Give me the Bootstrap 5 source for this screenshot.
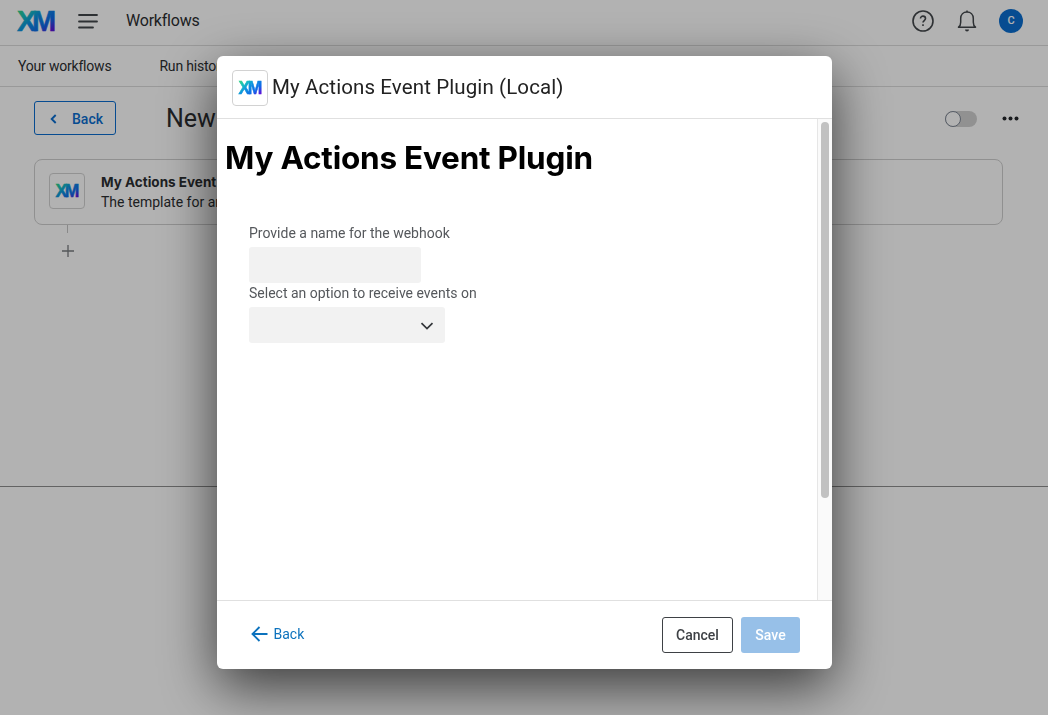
<!DOCTYPE html>
<html lang="en">
<head>
<meta charset="utf-8">
<meta name="viewport" content="width=device-width, initial-scale=1">
<title>Workflows</title>
<link href="https://cdn.jsdelivr.net/npm/bootstrap@5.3.0/dist/css/bootstrap.min.css" rel="stylesheet">
<style>
body{font-family:Roboto,"Liberation Sans",sans-serif;font-size:14px;line-height:20px;color:#2b2e31;background:#fff;height:715px;overflow:hidden}
svg{display:block;flex:none;overflow:visible}
.xm-text{font-family:"Liberation Sans",sans-serif;font-weight:700;stroke-width:.5px}
.xm-lg{font-size:29px;letter-spacing:-4.4px}
.xm-sm{font-size:17.5px;letter-spacing:-2.5px}
.topbar{height:46px;border-bottom:1px solid #dcdcdc;padding-left:17px;padding-right:25px}
.product{font-size:16px;font-weight:400;margin-left:28px;letter-spacing:-.22px}
.menu-btn{margin-left:23px}
.help{margin-right:23px}
.avatar{width:24px;height:24px;background:#0b6ed0;color:#fff;font-size:11px;font-weight:500;margin-left:22px}
.subnav{height:41px;border-bottom:1px solid #dcdcdc;padding-left:18px;gap:48px;letter-spacing:-.2px}
.toolbar{height:72px;padding:0 28px 9px 34px}
.btn-outline-back{width:82px;height:34px;border:1px solid #0b6ed0;border-radius:3px;color:#0b6ed0;font-size:14px;font-weight:500;padding:2px 0 0 15px;gap:15px;margin-bottom:2px}
.btn-outline-back span{padding-top:2px}
.flow-title{font-size:25px;margin-left:50px}
.toggle{width:32px;height:16px;border-radius:8px;background:#d0d0d0}
.toggle i{display:block;width:16px;height:16px;border-radius:50%;border:1px solid #7d8694;background:#fff}
.dots{margin-left:25px}
.canvas{height:328px;padding:0 45px 0 34px;border-bottom:1px solid #8f8f8f}
.step{height:66px;border:1px solid #cfcfcf;border-radius:8px;padding-left:14px}
.step .xm-tile{margin-bottom:2px}
.step-name{font-family:Inter,sans-serif;font-weight:700;font-size:13.5px}
.xm-tile{width:36px;height:36px;border:1px solid #d2d2d2;border-radius:4px;flex:none}
.stem{width:1px;height:8px;background:#c4c4c4;margin-left:33px}
.plus{margin:12px 0 0 28px}
.scrim{position:fixed;inset:0;background:rgba(0,0,0,.3)}
.dialog{width:615px;height:613px;margin:56px 0 0 217px;background:#fff;border-radius:6px;box-shadow:0 18px 56px rgba(0,0,0,.68);overflow:hidden}
.dialog-head{height:63px;border-bottom:1px solid #e0e0e0;padding-left:15px;gap:4px}
.dialog-head .xm-tile{margin-top:2px}
.dialog-title{font-size:20.5px;letter-spacing:.11px;color:#222}
.dialog-main{height:481px}
.track{width:15px;background:#fafafa;border-left:1px solid #e6e6e6;padding:3px 0 0 3px}
.thumb{width:8px;height:376px;border-radius:4px;background:#c1c1c1}
.plugin-title{font-family:Inter,sans-serif;font-size:31.5px;line-height:38px;font-weight:700;color:#000;margin:20px 0 0 8px;letter-spacing:-.22px}
.fields{margin:46px 0 0 32px;color:#55585c}
.fields label{display:block;height:20px;line-height:20px;margin-bottom:4px}
.field-box{height:36px;background:#f2f2f2;border-radius:3px}
.text-box{width:172px}
.pick-box{width:196px;padding:2px 11px 0 0}
.dialog-foot{height:69px;border-top:1px solid #e0e0e0;padding:0 32px 0 34px}
.back-link{color:#0c72bd;gap:5.5px;padding-bottom:2px}
.btn-cancel,.btn-save{height:36px;border-radius:3px;font-size:14px;font-weight:500;padding:0}
.btn-cancel{width:71px;border:1px solid #3e4145;color:#3e4145}
.btn-save{width:59px;background:#97c0e8;color:#fff;border:0}
</style>
</head>
<body>
<svg width="0" height="0" class="position-absolute"><defs>
<linearGradient id="xmg" x1="0" y1="0" x2="1" y2="1"><stop offset=".12" stop-color="#2fd08c"/><stop offset=".27" stop-color="#16bfc0"/><stop offset=".45" stop-color="#0b8fe0"/><stop offset=".68" stop-color="#1068e8"/><stop offset=".86" stop-color="#5a14d8"/></linearGradient>
</defs></svg>
<header class="topbar d-flex align-items-center pb-1">
  <svg width="38" height="20" viewBox="0 0 38 20"><text class="xm-text xm-lg" x="0" y="20" fill="url(#xmg)" stroke="url(#xmg)">XM</text></svg>
  <svg class="menu-btn" width="20" height="16" viewBox="0 0 20 16" stroke="#43474b" stroke-width="1.8" stroke-linecap="round"><path d="M1 2h18M1 8.500h18M1 14.500h14"/></svg>
  <span class="product">Workflows</span>
  <svg class="help ms-auto" width="22" height="22" viewBox="0 0 22 22" fill="none" stroke="#43474b" stroke-width="1.6"><circle cx="11" cy="11" r="10"/><path d="M8.500 8.600c0-3.300 5-3.200 5 0 0 1.900-2.500 2-2.500 4M11 14.200v1.800"/></svg>
  <svg width="20" height="22" viewBox="0 0 20 22" fill="none" stroke="#43474b" stroke-width="1.500"><path d="M1.500 17.200h17c-1.700-1.200-2.200-3-2.200-5V8.500C16.300 4.500 13.600 2 10 2S3.700 4.500 3.700 8.500v3.700c0 2-.5 3.800-2.200 5z" stroke-linejoin="round"/><path d="M10 .5v1.500"/><path d="M8 19.500h4a2 2 0 0 1-4 0z" fill="#43474b" stroke="none"/></svg>
  <span class="avatar rounded-circle d-flex align-items-center justify-content-center">C</span>
</header>
<nav class="subnav d-flex align-items-center"><span>Your workflows</span><span>Run history</span></nav>
<div class="toolbar d-flex align-items-center">
  <button class="btn btn-outline-back d-flex align-items-center"><svg width="7" height="10" viewBox="0 0 7 10" fill="none" stroke="currentColor" stroke-width="1.900"><path d="M5.700 1L1.700 5l4 4"/></svg><span>Back</span></button>
  <span class="flow-title">New workflow</span>
  <span class="toggle ms-auto"><i></i></span>
  <svg class="dots" width="18" height="4" viewBox="0 0 18 4" fill="#25282b"><circle cx="2.500" cy="1.500" r="2"/><circle cx="8.500" cy="1.500" r="2"/><circle cx="14.500" cy="1.500" r="2"/></svg>
</div>
<main class="canvas">
  <div class="step d-flex align-items-center">
    <span class="xm-tile d-flex align-items-center justify-content-center"><svg width="24" height="12" viewBox="0 0 24 12"><text class="xm-text xm-sm" x="0.500" y="12" fill="url(#xmg)" stroke="url(#xmg)">XM</text></svg></span>
    <div class="step-copy ms-3"><div class="step-name">My Actions Event Plugin</div><div>The template for an actions event</div></div>
  </div>
  <div class="stem"></div>
  <svg class="plus" width="12" height="12" viewBox="0 0 12 12" stroke="#7a7d80" stroke-width="1.300"><path d="M0 6h12M6 0v12"/></svg>
</main>

<div class="scrim">
  <section class="dialog d-flex flex-column" role="dialog">
    <header class="dialog-head d-flex align-items-center">
      <span class="xm-tile d-flex align-items-center justify-content-center"><svg width="24" height="12" viewBox="0 0 24 12"><text class="xm-text xm-sm" x="0.500" y="12" fill="url(#xmg)" stroke="url(#xmg)">XM</text></svg></span>
      <span class="dialog-title">My Actions Event Plugin (Local)</span>
    </header>
    <div class="dialog-main d-flex">
      <div class="flex-grow-1">
        <h1 class="plugin-title">My Actions Event Plugin</h1>
        <div class="fields">
          <label>Provide a name for the webhook</label>
          <div class="field-box text-box"></div>
          <label>Select an option to receive events on</label>
          <div class="field-box pick-box d-flex align-items-center justify-content-end"><svg width="14" height="8" viewBox="0 0 14 8" fill="none" stroke="#33363a" stroke-width="1.700"><path d="M1.500 1.200L7 6.600l5.500-5.400"/></svg></div>
        </div>
      </div>
      <div class="track"><div class="thumb"></div></div>
    </div>
    <footer class="dialog-foot d-flex align-items-center">
      <span class="back-link d-flex align-items-center me-auto"><svg width="17" height="16" viewBox="0 0 17 16" fill="none" stroke="currentColor" stroke-width="1.900"><path d="M16.500 8H1.500M8.500 1L1.500 8l7 7"/></svg><span>Back</span></span>
      <button class="btn btn-cancel me-2">Cancel</button>
      <button class="btn btn-save">Save</button>
    </footer>
  </section>
</div>
<script src="https://cdn.jsdelivr.net/npm/bootstrap@5.3.0/dist/js/bootstrap.bundle.min.js"></script>
</body>
</html>
